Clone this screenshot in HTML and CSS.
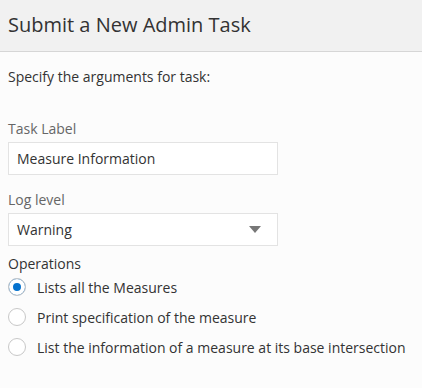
FILE: index.html
```html
<!DOCTYPE html>
<html>
<head>
  <title>Submit a New Admin Task</title>
  <link rel="stylesheet" href="styles.css">
</head>
<body>
  <div class="dialog">
    <div class="dialog-header">
      <h1>Submit a New Admin Task</h1>
    </div>
    <div class="dialog-body">
      <p class="intro">Specify the arguments for task:</p>

      <div class="field">
        <label class="field-label" for="taskLabel">Task Label</label>
        <div class="text-box" id="taskLabel">Measure Information</div>
      </div>

      <div class="field">
        <label class="field-label" for="logLevel">Log level</label>
        <div class="select-box" id="logLevel">
          <span>Warning</span>
          <span class="arrow"></span>
        </div>
      </div>

      <div class="field-label ops-label">Operations</div>
      <div class="radio-list">
        <div class="radio-row"><span class="radio checked"></span>Lists all the Measures</div>
        <div class="radio-row"><span class="radio"></span>Print specification of the measure</div>
        <div class="radio-row"><span class="radio"></span>List the information of a measure at its base intersection</div>
      </div>
    </div>
  </div>
</body>
</html>
```

FILE: styles.css
```css
* {
  box-sizing: border-box;
}
body {
  margin: 0;
  background-color: #fcfcfc;
  font-family: 'Segoe UI', 'Open Sans', sans-serif;
  color: #333;
}
.dialog-header {
  height: 52px;
  background-color: #f1f1f1;
  border-bottom: 1px solid #d6d6d6;
  padding: 0 8px 2px;
  display: flex;
  align-items: center;
}
h1 {
  margin: 0;
  font-size: 20px;
  font-weight: normal;
  color: #333;
}
.dialog-body {
  padding: 0 8px;
}
.intro {
  margin: 15px 0 0;
  font-size: 14px;
  line-height: 20px;
}
.field {
  margin-top: 32px;
}
.field + .field {
  margin-top: 15px;
}
.field-label {
  display: block;
  font-size: 14px;
  line-height: 20px;
  color: #666;
  margin-bottom: 3px;
}
.text-box,
.select-box {
  width: 270px;
  height: 33px;
  border: 1px solid #e3e3e3;
  background-color: #fff;
  padding: 0 8px;
  font-size: 14px;
  line-height: 31px;
  color: #333;
}
.select-box {
  display: flex;
  justify-content: space-between;
  align-items: center;
}
.arrow {
  width: 0;
  height: 0;
  border-left: 6px solid transparent;
  border-right: 6px solid transparent;
  border-top: 7px solid #777;
  margin-right: 8px;
}
.ops-label {
  margin: 8px 0 0;
  color: #333;
}
.radio-list {
  margin-top: -2px;
}
.radio-row {
  display: flex;
  align-items: center;
  height: 30px;
  font-size: 14px;
  color: #333;
}
.radio {
  width: 18px;
  height: 18px;
  border: 1px solid #c8c8c8;
  border-radius: 50%;
  background-color: #fff;
  margin-right: 11px;
  flex-shrink: 0;
}
.radio.checked {
  background-color: #0572ce;
  box-shadow: inset 0 0 0 4px #fff;
}
```
